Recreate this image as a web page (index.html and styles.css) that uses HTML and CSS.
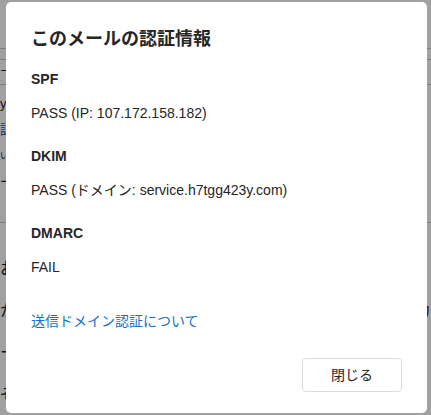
FILE: index.html
```html
<!DOCTYPE html>
<html lang="ja">
  <head>
    <meta charset="UTF-8" />
    <meta name="viewport" content="width=device-width, initial-scale=1.0" />
    <title>このメールの認証情報</title>
    <link rel="stylesheet" href="styles.css">
  </head>
  <body>
    <!-- page behind the dialog -->
    <div class="page">
      <div class="page__row page__row--top"></div>
      <div class="page__row page__row--thin"></div>
      <div class="page__row page__row--mid"><span>ー</span></div>
      <div class="page__row page__row--tall">
        <p>y</p>
        <p class="page__link">認</p>
        <p class="page__small">い</p>
        <p>ー</p>
      </div>
      <div class="page__body">
        <p>お</p>
        <p class="page__split"><span>か</span><span>カ</span></p>
        <p>ー</p>
        <p>ぞ</p>
      </div>
    </div>

    <div class="backdrop"></div>

    <div class="modal" role="dialog" aria-labelledby="modal-title">
      <h2 class="modal__title" id="modal-title">このメールの認証情報</h2>
      <dl class="auth-list">
        <div class="auth-list__item">
          <dt>SPF</dt>
          <dd>PASS (IP: 107.172.158.182)</dd>
        </div>
        <div class="auth-list__item">
          <dt>DKIM</dt>
          <dd>PASS (ドメイン: service.h7tgg423y.com)</dd>
        </div>
        <div class="auth-list__item">
          <dt>DMARC</dt>
          <dd>FAIL</dd>
        </div>
      </dl>
      <a class="modal__link" href="#">送信ドメイン認証について</a>
      <div class="modal__footer">
        <button class="btn" type="button">閉じる</button>
      </div>
    </div>
  </body>
</html>
```

FILE: styles.css
```css
* {
  box-sizing: border-box;
  margin: 0;
  padding: 0;
}
:root {
  --text: #262626;
  --link: #1a6fc6;
  --border: #dcdcdc;
}
body {
  font: 14px/20px "Liberation Sans", Arial, "Noto Sans CJK JP", sans-serif;
  color: var(--text);
  background: #fff;
  height: 100vh;
  overflow: hidden;
}

/* page behind */
.page {
  width: 100%;
}
.page__row {
  border-bottom: 1px solid #c8c8c8;
}
.page__row--top {
  height: 49px;
}
.page__row--thin {
  height: 11px;
}
.page__row--mid {
  height: 25px;
  font-size: 12px;
  line-height: 24px;
}
.page__row--tall {
  height: 138px;
  padding-top: 10px;
  font-size: 13px;
  line-height: 18px;
}
.page__row--tall p {
  margin-bottom: 8px;
}
.page__link {
  color: #1a4fa0;
}
.page__small {
  font-size: 9px;
}
.page__body {
  padding-top: 36px;
  font-size: 16px;
}
.page__body p {
  margin-bottom: 22px;
}
.page__split {
  display: flex;
  justify-content: space-between;
}

/* dialog */
.backdrop {
  position: fixed;
  inset: 0;
  background: rgba(0, 0, 0, 0.37);
}
.modal {
  position: fixed;
  top: 2px;
  left: 6px;
  width: 421px;
  height: 411px;
  background: #fff;
  border-radius: 5px;
  padding: 24px 25px 21px 25px;
  display: flex;
  flex-direction: column;
}
.modal__title {
  font-size: 18px;
  line-height: 26px;
  font-weight: bold;
  margin-bottom: 17px;
}
.auth-list {
  display: flex;
  flex-direction: column;
  gap: 23px;
}
.auth-list dt {
  font-weight: bold;
  margin-bottom: 14px;
}
.auth-list dd {
  margin: 0;
}
.modal__link {
  margin-top: 34px;
  color: var(--link);
  text-decoration: none;
  align-self: flex-start;
}
.modal__footer {
  margin-top: auto;
  display: flex;
  justify-content: flex-end;
}
.btn {
  width: 100px;
  height: 34px;
  background: #fff;
  border: 1px solid var(--border);
  border-radius: 4px;
  font: inherit;
  color: var(--text);
  cursor: pointer;
}
```
